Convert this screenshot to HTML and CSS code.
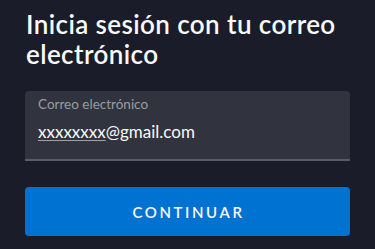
FILE: index.html
```html
<!DOCTYPE html>
<html lang="es">
<head>
<meta charset="utf-8">
<link rel="stylesheet" href="styles.css">
</head>
<body>
<main class="login">
  <h1 class="title">Inicia sesión con tu correo electrónico</h1>
  <div class="field">
    <label class="field-label">Correo electrónico</label>
    <div class="field-value"><span class="spell">xxxxxxxx</span>@gmail.com</div>
  </div>
  <button class="btn">CONTINUAR</button>
</main>
</body>
</html>
```
FILE: styles.css
```css
html, body {
  margin: 0;
  padding: 0;
  background: #1a1d29;
  height: 100%;
}
body {
  font-family: Lato, "Noto Sans", sans-serif;
  color: #f9f9f9;
}
.login {
  padding: 9px 25px 0 25px;
  display: flex;
  flex-direction: column;
}
.title {
  margin: 0 0 0 1px;
  font-size: 26px;
  line-height: 30px;
  font-weight: 600;
  letter-spacing: 0.4px;
}
.field {
  margin-top: 22px;
  background: #31343e;
  border-radius: 4px 4px 0 0;
  border-bottom: 2px solid #5a5c66;
  padding: 5px 13px 0;
  display: flex;
  flex-direction: column;
  box-sizing: border-box;
  height: 70px;
}
.field-label {
  font-size: 13.5px;
  line-height: 16px;
  color: #9b9ca2;
}
.field-value {
  margin-top: 10px;
  font-size: 17px;
  line-height: 20px;
  color: #f9f9f9;
}
.spell {
  text-decoration: underline;
  text-decoration-color: #a0a1a8;
  text-underline-offset: 2px;
}
.btn {
  margin-top: 26px;
  height: 49px;
  border: none;
  border-radius: 4px;
  background: #0072d2;
  color: #f9f9f9;
  font-family: Lato, "Noto Sans", sans-serif;
  font-size: 15px;
  font-weight: 600;
  letter-spacing: 2.6px;
  padding: 0 0 0 2px;
}
```
